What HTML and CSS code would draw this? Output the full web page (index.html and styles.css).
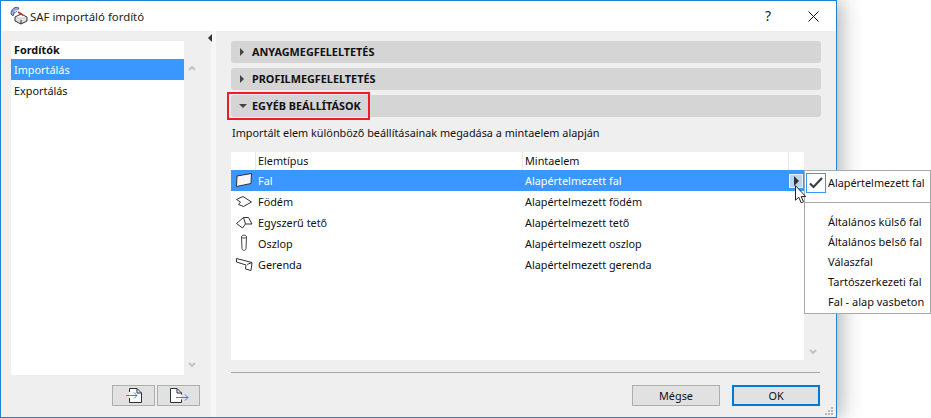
FILE: index.html
```html
<!DOCTYPE html>
<html lang="hu">
<head>
<meta charset="utf-8">
<title>SAF importáló fordító</title>
<link rel="stylesheet" href="styles.css">
</head>
<body>
<div class="window">
  <header class="titlebar">
    <svg class="appicon" width="20" height="20" viewBox="0 0 20 20">
      <path d="M1 8C1 3 5 0 9 2L7 5 4 7 3 10Z" fill="#8fa6d8" stroke="#4a5f99"/>
      <path d="M5 6C5 4 8 4 9 5" fill="none" stroke="#fff"/>
      <path d="M5 11l6-3 6 3-6 3z" fill="#fff" stroke="#333"/>
      <path d="M5 11v4l6 3 6-3v-4" fill="#ddd" stroke="#333"/>
      <path d="M11 14v4" stroke="#333"/>
      <path d="M8 6l5 3" stroke="#b33" stroke-width="1.500"/>
    </svg>
    <span class="title">SAF importáló fordító</span>
    <span class="help">?</span>
    <svg class="close" width="11" height="11" viewBox="0 0 11 11"><path d="M.5.5l10 10M10.500.5l-10 10" stroke="#111" fill="none"/></svg>
  </header>
  <div class="content">
    <aside class="left">
      <div class="listwrap">
        <div class="list">
          <div class="list-head">Fordítók</div>
          <div class="list-item selected">Importálás</div>
          <div class="list-item">Exportálás</div>
        </div>
        <div class="scroll">
          <svg width="8" height="6" viewBox="0 0 8 6"><path d="M1 5l3-3 3 3" fill="none" stroke="#c4c4c4" stroke-width="2"/></svg>
          <svg width="8" height="6" viewBox="0 0 8 6"><path d="M1 1l3 3 3-3" fill="none" stroke="#c4c4c4" stroke-width="2"/></svg>
        </div>
      </div>
      <div class="iconbtns">
        <button class="iconbtn" aria-label="Import">
          <svg width="41" height="19" viewBox="0 0 41 19">
            <path d="M16.500 6V2.500H24L28.500 7v9.500h-12V12" fill="#fff" stroke="#2a2f38"/>
            <path d="M16.500 6v6" stroke="#fff"/>
            <path d="M24 2.500V7h4.500" fill="none" stroke="#2a2f38"/>
            <path d="M13 9.500h11M21 6.500l3 3-3 3" fill="none" stroke="#2f86f5"/>
          </svg>
        </button>
        <button class="iconbtn" aria-label="Export">
          <svg width="41" height="19" viewBox="0 0 41 19">
            <path d="M12.500 2.500H19L23.500 7v9.500h-11z" fill="#fff" stroke="#2a2f38"/>
            <path d="M19 2.500V7h4.500" fill="none" stroke="#2a2f38"/>
            <path d="M23.500 8.500v5" stroke="#e1e1e1"/>
            <path d="M18 11.500h12M27 8.500l3 3-3 3" fill="none" stroke="#2f86f5"/>
          </svg>
        </button>
      </div>
    </aside>
    <div class="splitter"><span class="split-arrow"></span></div>
    <main class="right">
      <div class="section"><span class="tri"></span>ANYAGMEGFELELTETÉS</div>
      <div class="section"><span class="tri"></span>PROFILMEGFELELTETÉS</div>
      <div class="section open"><span class="tri-down"></span>EGYÉB BEÁLLÍTÁSOK<span class="redbox"></span></div>
      <p class="desc">Importált elem különböző beállításainak megadása a mintaelem alapján</p>
      <div class="tablewrap">
        <div class="table">
          <div class="row head">
            <div class="c-icon"></div><div class="c-type">Elemtípus</div><div class="c-sample">Mintaelem</div><div class="c-end"></div>
          </div>
          <div class="row selected">
            <div class="c-icon"><svg width="25" height="21" viewBox="0 0 25 21"><path d="M6 6L20.500 3.500 20 13.500 5.500 16.500z" fill="#f6f6f6" stroke="#333"/></svg></div>
            <div class="c-type">Fal</div><div class="c-sample">Alapértelmezett fal</div>
            <div class="c-end"><span class="arrowbtn"><span class="tri dark"></span></span></div>
          </div>
          <div class="row">
            <div class="c-icon"><svg width="25" height="21" viewBox="0 0 25 21"><path d="M5.500 8.500L12 5.500l8.500 5.500-8 4.500-5-2 2-2.500z" fill="#fff" stroke="#333"/></svg></div>
            <div class="c-type">Födém</div><div class="c-sample">Alapértelmezett födém</div><div class="c-end"></div>
          </div>
          <div class="row">
            <div class="c-icon"><svg width="25" height="21" viewBox="0 0 25 21"><path d="M5.500 11.500l7-6h5l3.500 6.500h-6.500l-3 4z" fill="#fff" stroke="#333"/><path d="M12.500 5.500l2 6.500" stroke="#333" fill="none"/></svg></div>
            <div class="c-type">Egyszerű tető</div><div class="c-sample">Alapértelmezett tető</div><div class="c-end"></div>
          </div>
          <div class="row">
            <div class="c-icon"><svg width="25" height="21" viewBox="0 0 25 21"><path d="M10.500 4c0-2.500 5-2.500 5 0l-.5 11.500c-.3 2.500-3.700 2.500-4 0z" fill="#fff" stroke="#444"/><path d="M10.500 4c1 1.500 4 1.500 5 0" stroke="#444" fill="none"/></svg></div>
            <div class="c-type">Oszlop</div><div class="c-sample">Alapértelmezett oszlop</div><div class="c-end"></div>
          </div>
          <div class="row">
            <div class="c-icon"><svg width="25" height="21" viewBox="0 0 25 21"><path d="M5.500 4.500L21 8.500l-1 8-5.500-1.500.5-4-9.500-3z" fill="#fff" stroke="#333"/><path d="M16 10.500L21 8.500" stroke="#333" fill="none"/></svg></div>
            <div class="c-type">Gerenda</div><div class="c-sample">Alapértelmezett gerenda</div><div class="c-end"></div>
          </div>
        </div>
        <div class="scroll tall">
          <svg width="8" height="6" viewBox="0 0 8 6"><path d="M1 5l3-3 3 3" fill="none" stroke="#c4c4c4" stroke-width="2"/></svg>
          <svg width="8" height="6" viewBox="0 0 8 6"><path d="M1 1l3 3 3-3" fill="none" stroke="#c4c4c4" stroke-width="2"/></svg>
        </div>
      </div>
      <div class="rule"></div>
      <div class="actions">
        <button class="btn">Mégse</button>
        <button class="btn primary">OK</button>
      </div>
    </main>
  </div>
  <svg class="grip" width="9" height="9" viewBox="0 0 9 9"><path d="M6 0h2v2H6zM3 3h2v2H3zM6 3h2v2H6zM0 6h2v2H0zM3 6h2v2H3zM6 6h2v2H6z" fill="#b5b5b5"/></svg>
</div>
<div class="menu">
  <div class="menu-top"><span class="checkbox"><svg width="14" height="12" viewBox="0 0 14 12"><path d="M1 6.500l3.500 3.500L13 1" fill="none" stroke="#3c3f44" stroke-width="2.200"/></svg></span><span>Alapértelmezett fal</span></div>
  <div class="menu-sep"></div>
  <div class="menu-item">Általános külső fal</div>
  <div class="menu-item">Általános belső fal</div>
  <div class="menu-item">Válaszfal</div>
  <div class="menu-item">Tartószerkezeti fal</div>
  <div class="menu-item">Fal - alap vasbeton</div>
</div>
<svg class="cursor" width="13" height="19" viewBox="0 0 13 19"><path d="M1.500 .7v14.500l3.300-3 2.300 5.600 2.400-1-2.300-5.300h4.500z" fill="#fff" stroke="#222"/></svg>
</body>
</html>
```
FILE: styles.css
```css
* { box-sizing: border-box; }
html, body { margin: 0; padding: 0; background: #fff; overflow: hidden; }
body { width: 931px; height: 418px; position: relative; font-family: "Noto Sans", "Open Sans", sans-serif; font-size: 10.85px; color: #111; }
.window { width: 837px; height: 418px; border: 1px solid #1883d7; background: #efefef; display: flex; flex-direction: column; box-shadow: 4px 0 20px rgba(0,0,0,.32); position: relative; }
.titlebar { height: 30px; background: #fff; display: flex; align-items: center; padding-left: 9px; flex: none; }
.title { font-size: 11.4px; color: #222; flex: 1; }
.help { font-size: 14px; margin-right: 37px; color: #222; line-height: 1; }
.close { margin-right: 17px; }
.content { flex: 1; display: flex; min-height: 0; }
.left { width: 210px; flex: none; padding: 10px 11px 0 10px; display: flex; flex-direction: column; }
.listwrap { display: flex; height: 334px; }
.list { width: 173px; background: #fff; flex: none; }
.list-head { height: 18px; line-height: 18px; padding-left: 3px; font-weight: 700; color: #111; }
.list-item { height: 21px; line-height: 21px; padding-left: 3px; }
.list-item.selected { background: #3a97ff; color: #fff; }
.scroll { width: 16px; display: flex; flex-direction: column; justify-content: space-between; align-items: center; padding: 24px 0 7px; }
.iconbtns { display: flex; justify-content: flex-end; gap: 2px; margin-top: 10px; }
.iconbtn { width: 43px; height: 21px; padding: 0; border: 1px solid #adadad; background: #e1e1e1; display: block; }
.iconbtn svg { display: block; }
.splitter { width: 5px; background: #f6f6f6; flex: none; position: relative; }
.split-arrow { position: absolute; left: -3px; top: 3px; width: 0; height: 0; border-style: solid; border-width: 4px 4px 4px 0; border-color: transparent #333 transparent transparent; }
.right { flex: 1; padding: 10px 15px 0; display: flex; flex-direction: column; min-width: 0; }
.section { height: 22px; margin-bottom: 5px; flex: none; background: #d5d5d5; border-radius: 3px; display: flex; align-items: center; font-weight: 700; color: #111; padding: 0 0 1px 8px; position: relative; }
.tri { width: 0; height: 0; border-style: solid; border-width: 4px 0 4px 4px; border-color: transparent transparent transparent #444; margin-right: 8px; margin-left: 1px; }
.tri.dark { margin: 0; border-left-color: #333; border-width: 5px 0 5px 5px; }
.tri-down { width: 0; height: 0; border-style: solid; border-width: 4px 4px 0 4px; border-color: #444 transparent transparent transparent; margin-right: 5px; }
.redbox { position: absolute; left: -4px; top: -3px; width: 143px; height: 28px; border: 2px solid #ee1c25; }
.desc { margin: 2px 0 0; height: 18px; line-height: 18px; flex: none; padding-left: 1px; }
.tablewrap { display: flex; height: 208px; margin-top: 10px; flex: none; }
.table { width: 573px; background: #fff; flex: none; }
.row { display: flex; height: 21px; align-items: center; }
.row.head { height: 18px; }
.row.selected { background: #3a97ff; color: #fff; }
.c-icon { width: 25px; height: 100%; flex: none; }
.c-icon svg { display: block; }
.c-type { width: 267px; padding-left: 2px; flex: none; }
.c-sample { width: 266px; padding-left: 2px; flex: none; }
.c-end { width: 15px; flex: none; height: 100%; display: flex; align-items: center; justify-content: flex-end; padding-right: 1px; }
.row.head > div { height: 100%; line-height: 18px; border-right: 1px solid #e8e8e8; }
.row.head > .c-end { border-right: 0; }
.arrowbtn { width: 14px; height: 14px; background: #bcd6f0; border: 1px solid #e8f2fc; display: flex; align-items: center; justify-content: center; }
.scroll.tall { width: 17px; padding: 48px 0 5px; }
.rule { height: 1px; background: #a5a5a5; margin: 12px 1px 0 0; flex: none; }
.actions { display: flex; justify-content: flex-end; gap: 12px; margin-top: 12px; padding-right: 1px; }
.btn { width: 88px; height: 21px; padding: 0; font: inherit; color: #111; background: #e1e1e1; border: 1px solid #adadad; }
.btn.primary { border: 2px solid #0078d7; }
.grip { position: absolute; right: 2px; bottom: 1px; }
.menu { position: absolute; left: 804px; top: 170px; width: 127px; height: 144px; background: #fff; border: 1px solid #a9a9a9; color: #111; z-index: 2; }
.menu-top { display: flex; align-items: center; height: 22px; padding: 1px 0 0 1px; gap: 2px; }
.checkbox { width: 20px; height: 20px; border: 1px solid #3a97ff; display: flex; align-items: center; justify-content: center; background: #fff; flex: none; }
.menu-sep { height: 1px; background: #a9a9a9; margin: 9px 0; }
.menu-item { height: 20px; line-height: 20px; padding-left: 23px; white-space: nowrap; font-size: 11px; }
.cursor { position: absolute; left: 794px; top: 185px; z-index: 3; }
```
